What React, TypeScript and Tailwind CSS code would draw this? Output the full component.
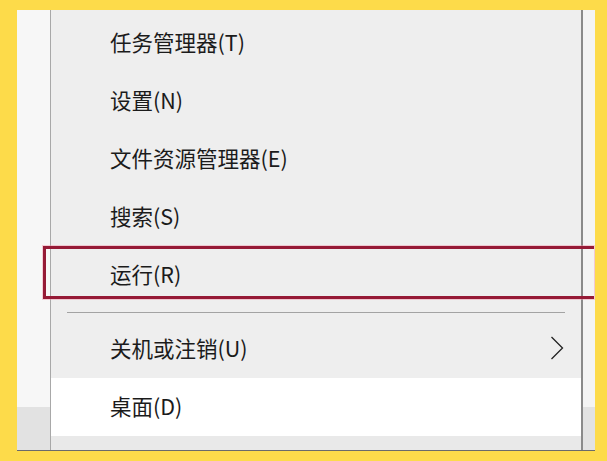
import React from "react";

const items = ["任务管理器(T)", "设置(N)", "文件资源管理器(E)", "搜索(S)", "运行(R)"];

function MenuItem({ label, white, chevron }: { label: string; white?: boolean; chevron?: boolean }) {
  return (
    <div
      className={`flex h-[58px] items-center justify-between pb-[2px] pl-[59px] pr-[17px] text-[21.5px] text-[#1b1b1b] ${
        white ? "bg-white" : ""
      }`}
    >
      <span className="leading-none">{label}</span>
      {chevron && (
        <svg width="14" height="24" viewBox="0 0 14 24" fill="none">
          {/* thin right chevron */}
          <path d="M1.5 1 L12.5 12 L1.5 23" stroke="#222" strokeWidth="1.3" />
        </svg>
      )}
    </div>
  );
}

export default function App() {
  return (
    <div
      className="relative h-[461px] w-[607px] bg-[#fddb4a] pl-[17px] pt-[10px]"
      style={{ fontFamily: '"Noto Sans CJK SC", "Noto Sans", sans-serif' }}
    >
      <div className="flex h-[441px] w-[578px] border-b border-[#6b6b6b]">
        {/* desktop strip, left */}
        <div className="flex w-[33px] flex-col">
          <div className="flex-1 bg-[#f7f7f7]" />
          <div className="h-[43px] bg-[#e2e2e2]" />
        </div>

        {/* start context menu */}
        <div className="flex w-[533px] flex-col border-l border-r-2 border-l-[#a8a8a8] border-r-[#8a8a8a] bg-[#eeeeee] pt-[4px]">
          {items.map((label) => (
            <MenuItem key={label} label={label} />
          ))}
          <div className="flex h-[16px] items-center pl-[16px]">
            <div className="h-px w-[498px] bg-[#a3a3a3]" />
          </div>
          <MenuItem label="关机或注销(U)" chevron />
          <MenuItem label="桌面(D)" white />
          <div className="flex-1 bg-[#e9e9e9]" />
        </div>

        {/* desktop strip, right */}
        <div className="flex w-[12px] flex-col">
          <div className="flex-1 bg-[#f4f4f4]" />
          <div className="h-[43px] bg-[#e2e2e2]" />
        </div>
      </div>

      {/* red highlight box around 运行, runs off the right edge */}
      <div className="absolute left-[43px] top-[246px] h-[53px] w-[551px] border-[3px] border-r-0 border-[#961a36] shadow-[0_0_0_1px_rgba(240,150,170,0.45)]" />
    </div>
  );
}
